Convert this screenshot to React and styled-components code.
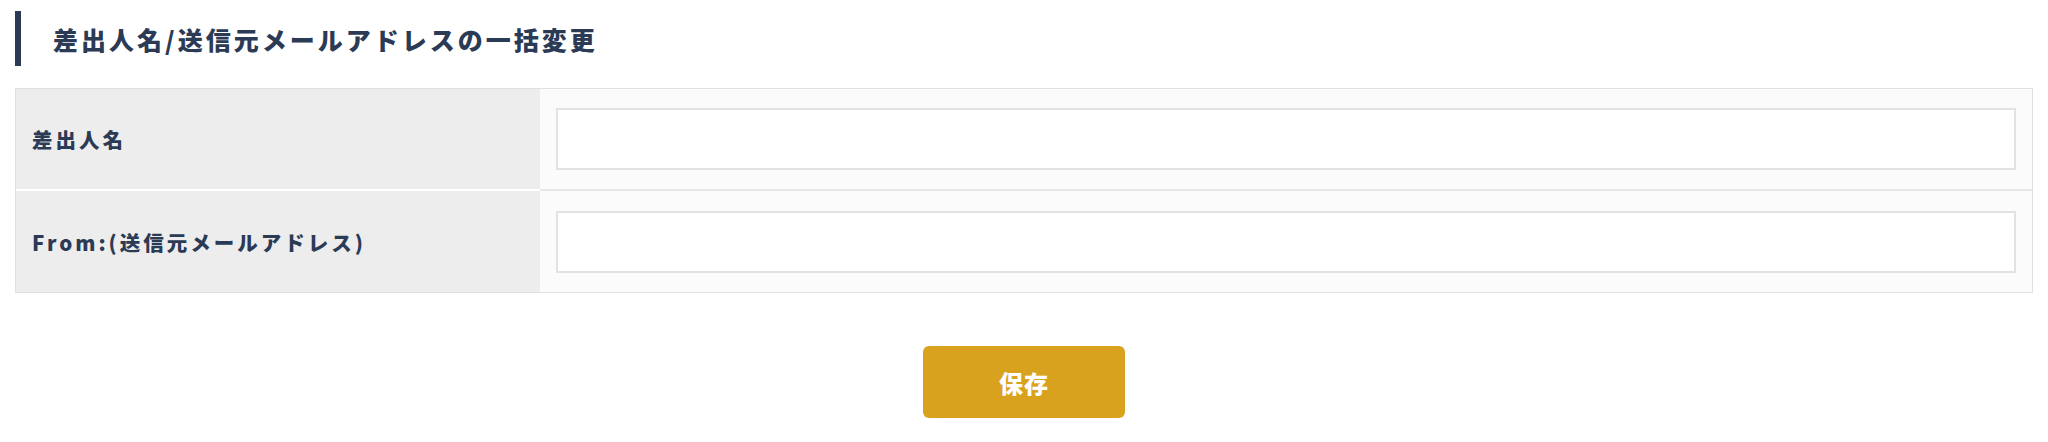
import React from 'react';
import styled, { createGlobalStyle } from 'styled-components';

const GlobalStyle = createGlobalStyle`
  body {
    margin: 0;
    background: #ffffff;
    font-family: "Noto Sans CJK JP", "Noto Sans", sans-serif;
  }
  * {
    box-sizing: border-box;
  }
`;

const Page = styled.div`
  padding: 11px 15px 24px;
  display: flex;
  flex-direction: column;
`;

const Heading = styled.h2`
  margin: 0;
  height: 55px;
  display: flex;
  align-items: center;
  border-left: 6px solid #2b3a55;
  padding-left: 32px;
  font-size: 25px;
  font-weight: 900;
  letter-spacing: 3px;
  color: #2b3a55;
`;

const Table = styled.div`
  margin-top: 22px;
  border: 1px solid #e0e0e0;
  display: grid;
  grid-template-columns: 524px 1fr;
`;

const LabelCell = styled.div`
  background: #ededed;
  display: flex;
  align-items: center;
  padding: 0 16px;
  height: ${p => p.h}px;
  font-size: 20.5px;
  font-weight: 900;
  letter-spacing: 3px;
  color: #2b3a55;
  border-bottom: ${p => (p.last ? 'none' : '2px solid #ffffff')};
`;

const ValueCell = styled.div`
  background: #fbfbfb;
  display: flex;
  align-items: center;
  padding: 0 16px;
  height: ${p => p.h}px;
  border-bottom: ${p => (p.last ? 'none' : '2px solid #e6e6e6')};
`;

const TextInput = styled.input`
  width: 100%;
  height: 62px;
  background: #ffffff;
  border: 2px solid #e2e2e2;
  border-radius: 0;
  outline: none;
  font-size: 18px;
  padding: 0 12px;
`;

const Actions = styled.div`
  display: flex;
  justify-content: center;
  margin-top: 53px;
`;

const SaveButton = styled.button`
  width: 202px;
  height: 72px;
  border: none;
  border-radius: 6px;
  background: #d9a21e;
  color: #ffffff;
  font-family: "Noto Sans CJK JP", sans-serif;
  font-size: 24px;
  font-weight: 900;
  letter-spacing: 1px;
  cursor: pointer;
`;

const rows = [
  { label: '差出人名', h: 102 },
  { label: 'From:(送信元メールアドレス)', h: 101 },
];

const App = () => (
  <>
    <GlobalStyle />
    <Page>
      <Heading>差出人名/送信元メールアドレスの一括変更</Heading>
      <Table>
        {rows.map((row, i) => (
          <React.Fragment key={row.label}>
            <LabelCell h={row.h} last={i === rows.length - 1}>
              {row.label}
            </LabelCell>
            <ValueCell h={row.h} last={i === rows.length - 1}>
              <TextInput type="text" />
            </ValueCell>
          </React.Fragment>
        ))}
      </Table>
      <Actions>
        <SaveButton type="button">保存</SaveButton>
      </Actions>
    </Page>
  </>
);

export default App;
